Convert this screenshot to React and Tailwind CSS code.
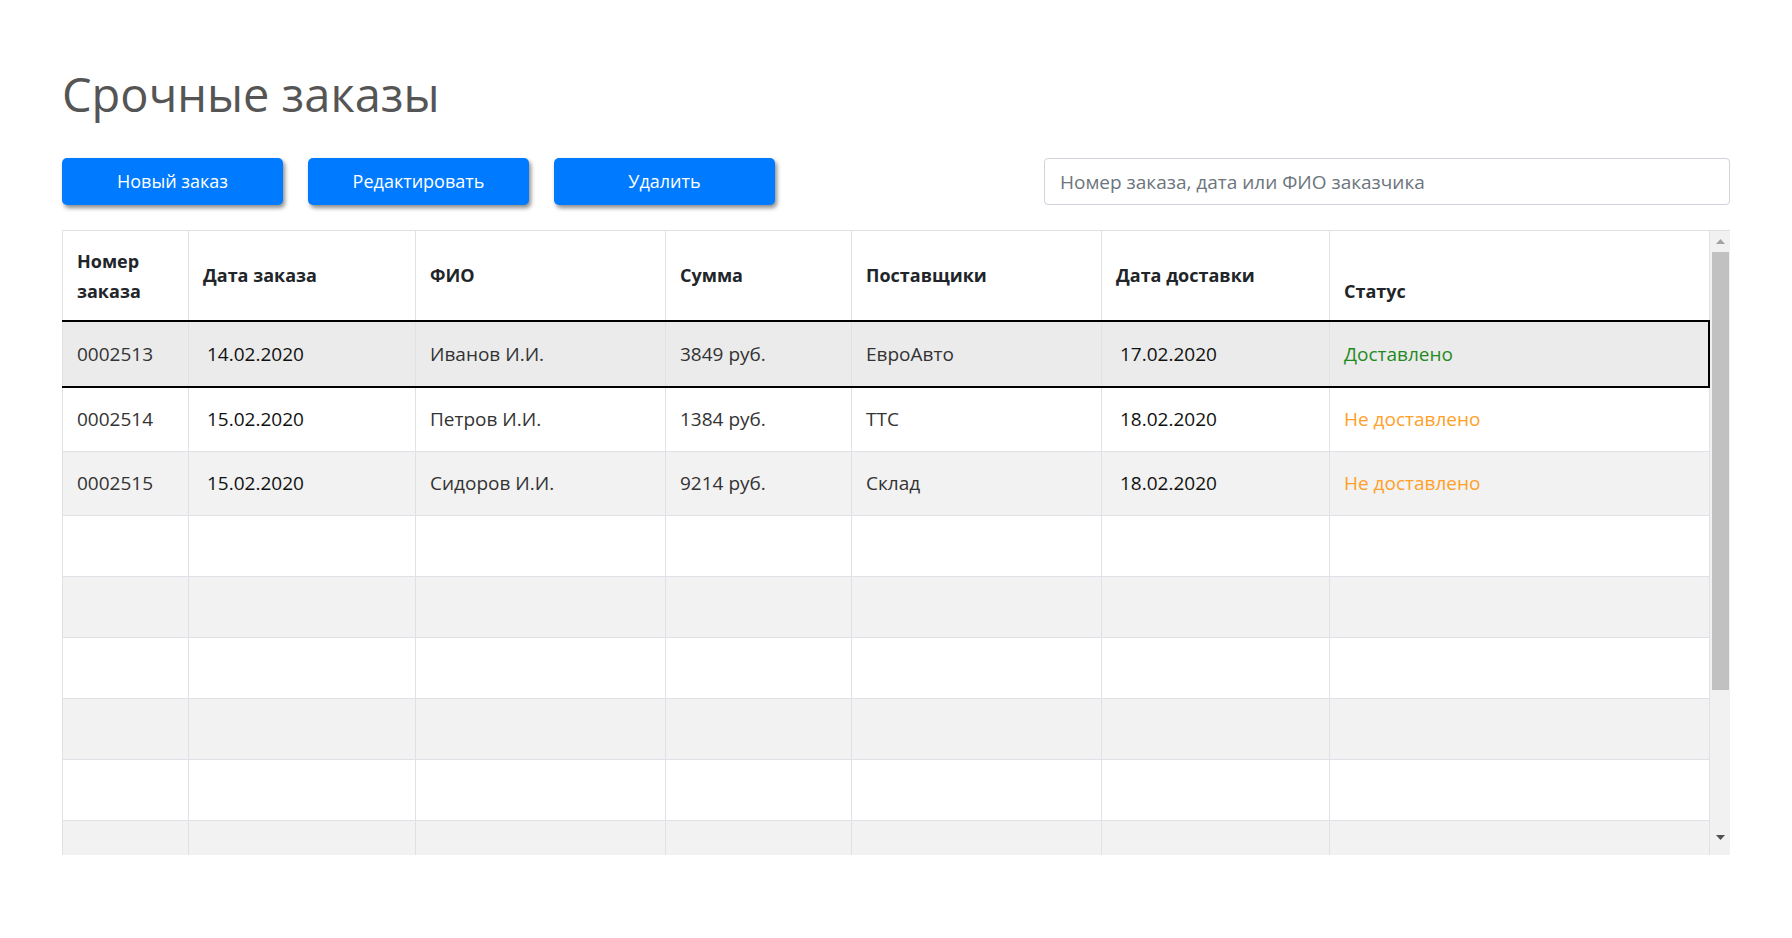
const rows = [
  { id: "0002513", date: "14.02.2020", name: "Иванов И.И.", sum: "3849 руб.", supplier: "ЕвроАвто", delivery: "17.02.2020", status: "Доставлено", ok: true },
  { id: "0002514", date: "15.02.2020", name: "Петров И.И.", sum: "1384 руб.", supplier: "ТТС", delivery: "18.02.2020", status: "Не доставлено", ok: false },
  { id: "0002515", date: "15.02.2020", name: "Сидоров И.И.", sum: "9214 руб.", supplier: "Склад", delivery: "18.02.2020", status: "Не доставлено", ok: false },
];

const cols = ["w-[126px]", "w-[227px]", "w-[250px]", "w-[186px]", "w-[250px]", "w-[228px]", ""];

function Btn({ children }) {
  return (
    <button className="w-[221px] h-[47px] rounded-[5px] bg-[#007bff] text-white text-[18px] shadow-[2px_3px_4px_rgba(0,0,0,0.45)]">
      {children}
    </button>
  );
}

function Scrollbar() {
  return (
    <div className="w-[20px] shrink-0 bg-[#f1f1f1] flex flex-col items-center">
      <div className="h-[21px] w-full flex items-center justify-center">
        <svg width="9" height="5" viewBox="0 0 9 5">
          <path d="M4.5 0L9 5H0z" fill="#a3a3a3" />
        </svg>
      </div>
      <div className="w-[17px] h-[438px] bg-[#c1c1c1]" />
      <div className="flex-1" />
      <div className="h-[20px] w-full flex items-start justify-center">
        <svg width="9" height="5" viewBox="0 0 9 5">
          <path d="M0 0H9L4.5 5z" fill="#505050" />
        </svg>
      </div>
    </div>
  );
}

export default function App() {
  return (
    <div className="min-h-[938px] bg-white px-[62px] pt-[65px] text-[#212529]" style={{ fontFamily: '"Open Sans", "Noto Sans", sans-serif' }}>
      <h1 className="text-[47px] leading-[58px] text-[#555555]">Срочные заказы</h1>

      <div className="mt-[35px] flex items-center">
        <div className="flex gap-[25px]">
          <Btn>Новый заказ</Btn>
          <Btn>Редактировать</Btn>
          <Btn>Удалить</Btn>
        </div>
        <input
          className="ml-auto w-[686px] h-[47px] rounded-[4px] border border-[#ced4da] px-[15px] text-[19px] placeholder:text-[#6c757d] outline-none"
          placeholder="Номер заказа, дата или ФИО заказчика"
        />
      </div>

      <div className="mt-[25px] h-[625px] flex overflow-hidden border-t border-[#dee2e6]">
        <div className="flex-1 overflow-hidden">
          <table className="w-full table-fixed border-collapse text-[19px]">
            <colgroup>
              {cols.map((c, i) => (
                <col key={i} className={c} />
              ))}
            </colgroup>
            <thead className="text-[18px]">
              <tr className="h-[90px] border-b-2 border-black">
                <th className="border-x border-[#dee2e6] px-[14px] text-left font-bold leading-[30px] align-middle">Номер<br />заказа</th>
                <th className="border-x border-[#dee2e6] px-[14px] text-left font-bold align-middle">Дата заказа</th>
                <th className="border-x border-[#dee2e6] px-[14px] text-left font-bold align-middle">ФИО</th>
                <th className="border-x border-[#dee2e6] px-[14px] text-left font-bold align-middle">Сумма</th>
                <th className="border-x border-[#dee2e6] px-[14px] text-left font-bold align-middle">Поставщики</th>
                <th className="border-x border-[#dee2e6] px-[14px] text-left font-bold align-middle">Дата доставки</th>
                <th className="border-x border-[#dee2e6] px-[14px] pb-[14px] text-left font-bold align-bottom leading-[30px]">Статус</th>
              </tr>
            </thead>
            <tbody>
              {rows.map((r, i) => {
                const sel = i === 0;
                const bg = sel ? "bg-[#ebebeb]" : i % 2 === 0 ? "bg-[#f2f2f2]" : "bg-white";
                const rowBorder = sel ? "border-b-2 border-b-black" : "border-b border-b-[#dee2e6]";
                const cell = `border-x border-[#dee2e6] px-[14px] align-middle ${rowBorder}`;
                return (
                  <tr key={r.id} className={`${bg} ${sel ? "h-[66px]" : "h-[64px]"}`}>
                    <td className={`${cell} text-[#333]`}>{r.id}</td>
                    <td className={`${cell} pl-[18px] text-[#111]`}>{r.date}</td>
                    <td className={`${cell} text-[#333]`}>{r.name}</td>
                    <td className={`${cell} text-[#333]`}>{r.sum}</td>
                    <td className={`${cell} text-[#333]`}>{r.supplier}</td>
                    <td className={`${cell} pl-[18px] text-[#111]`}>{r.delivery}</td>
                    <td
                      className={`${cell} ${sel ? "border-r-2 border-r-black" : ""} ${r.ok ? "text-[#1f8a1f]" : "text-[#ffa029]"}`}
                    >
                      {r.status}
                    </td>
                  </tr>
                );
              })}
              {[0, 1, 2, 3, 4, 5].map((k) => (
                <tr key={k} className={`h-[61px] ${k % 2 === 0 ? "bg-white" : "bg-[#f2f2f2]"}`}>
                  {cols.map((_, j) => (
                    <td key={j} className="border border-[#dee2e6]" />
                  ))}
                </tr>
              ))}
            </tbody>
          </table>
        </div>
        <Scrollbar />
      </div>
    </div>
  );
}
